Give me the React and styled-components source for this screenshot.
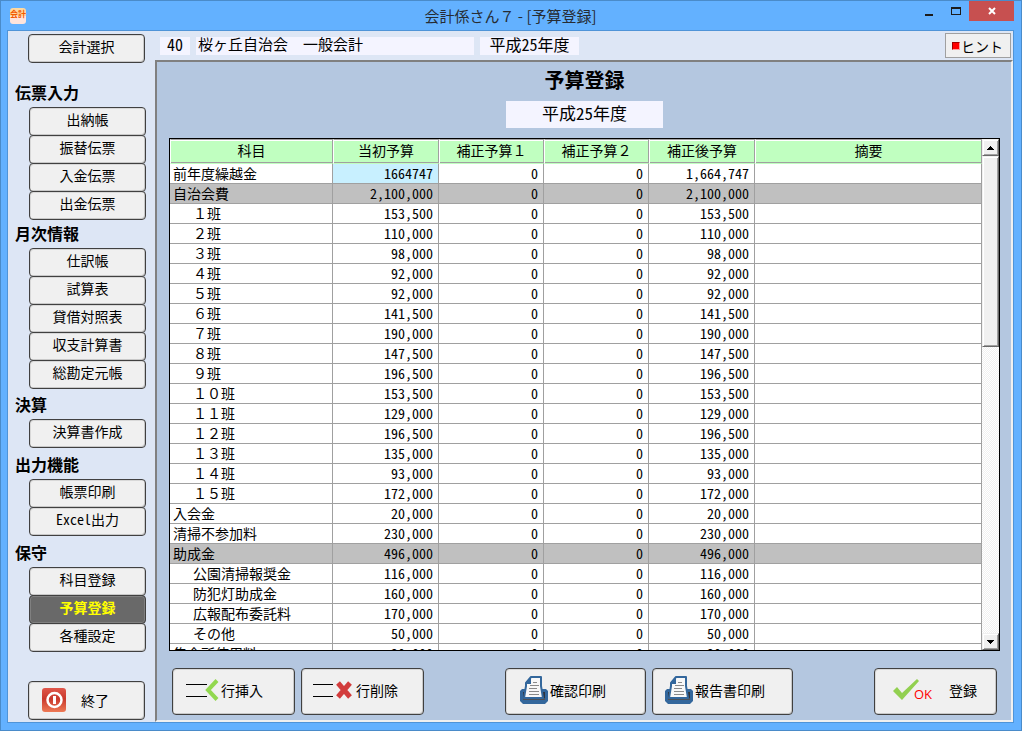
import React, { useState } from 'react';
import styled, { createGlobalStyle } from 'styled-components';

const menu = [
  { title: '伝票入力', space: 16, items: ['出納帳', '振替伝票', '入金伝票', '出金伝票'] },
  { title: '月次情報', space: 0, items: ['仕訳帳', '試算表', '貸借対照表', '収支計算書', '総勘定元帳'] },
  { title: '決算', space: 2, items: ['決算書作成'] },
  { title: '出力機能', space: 3, items: ['帳票印刷', 'Excel出力'] },
  { title: '保守', space: 3, items: ['科目登録', '予算登録', '各種設定'] },
];

const columns = ['科目', '当初予算', '補正予算１', '補正予算２', '補正後予算', '摘要'];

const rows = [
  { name: '前年度繰越金', amount: 1664747, editing: true },
  { name: '自治会費', amount: 2100000, total: true },
  { name: '１班', amount: 153500, indent: true },
  { name: '２班', amount: 110000, indent: true },
  { name: '３班', amount: 98000, indent: true },
  { name: '４班', amount: 92000, indent: true },
  { name: '５班', amount: 92000, indent: true },
  { name: '６班', amount: 141500, indent: true },
  { name: '７班', amount: 190000, indent: true },
  { name: '８班', amount: 147500, indent: true },
  { name: '９班', amount: 196500, indent: true },
  { name: '１０班', amount: 153500, indent: true },
  { name: '１１班', amount: 129000, indent: true },
  { name: '１２班', amount: 196500, indent: true },
  { name: '１３班', amount: 135000, indent: true },
  { name: '１４班', amount: 93000, indent: true },
  { name: '１５班', amount: 172000, indent: true },
  { name: '入会金', amount: 20000 },
  { name: '清掃不参加料', amount: 230000 },
  { name: '助成金', amount: 496000, total: true },
  { name: '公園清掃報奨金', amount: 116000, indent: true },
  { name: '防犯灯助成金', amount: 160000, indent: true },
  { name: '広報配布委託料', amount: 170000, indent: true },
  { name: 'その他', amount: 50000, indent: true },
  { name: '集会所使用料', amount: 20000 },
];

const format = n => n.toLocaleString('en-US');

const PrinterIcon = () => (
  <svg width="30" height="30" viewBox="0 0 30 30" aria-hidden="true">
    <path d="M3 14h24l2 2v10l-3 3H4l-3-3V16z" fill="#33679c" />
    <path d="M4 17h22v8H4z" fill="#30343c" />
    <path d="M4 23h22v2H4z" fill="#4c5158" />
    <path d="M12 2h10v9l2 12H5l2-12V8z" fill="#f8f8f8" stroke="#33679c" strokeWidth="2" strokeLinejoin="round" />
    <path d="M12 2v7H7V7z" fill="#33679c" />
    <path d="M14 7h4M11 10h9M10 13h8M10 16h10M10 19h10" transform="translate(0 .5)" stroke="#8a8a8a" />
  </svg>
);

const InsertIcon = () => (
  <svg width="34" height="24" viewBox="0 0 34 24" aria-hidden="true">
    <path d="M0 6.500h21M0 18.500h21" stroke="#000" />
    <path d="M31 2.500L22 12l9 9.500" fill="none" stroke="#92d84f" strokeWidth="4" />
  </svg>
);

const DeleteIcon = () => (
  <svg width="42" height="24" viewBox="0 0 42 24" aria-hidden="true">
    <path d="M0 6.500h20M0 18.500h20" stroke="#000" />
    <path d="M25 5l12 14M37 5L25 19" fill="none" stroke="#d23c3c" strokeWidth="5" />
  </svg>
);

const CheckIcon = () => (
  <svg width="27" height="22" viewBox="0 0 27 22" aria-hidden="true">
    <path d="M0 12l4-4 5 6L24 0l2 2L9 21z" fill="#92d050" />
  </svg>
);

const PowerIcon = () => (
  <svg width="24" height="24" viewBox="0 0 24 24" aria-hidden="true">
    <defs>
      <linearGradient id="power" x1="0" y1="0" x2="0" y2="1">
        <stop offset="0" stopColor="#e0574a" />
        <stop offset="0.45" stopColor="#c9382c" />
        <stop offset="1" stopColor="#ee7a55" />
      </linearGradient>
    </defs>
    <rect width="24" height="24" rx="3" fill="url(#power)" />
    <circle cx="12.500" cy="12" r="7" fill="none" stroke="#fff" strokeWidth="2.500" />
    <path d="M12.500 8v8" stroke="#fff" strokeWidth="3" />
  </svg>
);

const App = () => {
  const [value, setValue] = useState('1664747');

  return (
    <Window>
      <GlobalStyle />
      <TitleBar>
        <AppIcon>会計</AppIcon>
        <WindowTitle>会計係さん７ - [予算登録]</WindowTitle>
        <WindowButtons>
          <WindowButton aria-label="最小化">
            <svg width="8" height="14"><path d="M0 10h8v2H0z" fill="#1c1c1c" /></svg>
          </WindowButton>
          <WindowButton aria-label="最大化">
            <svg width="10" height="14"><path d="M0 3h10v8H0zM1 5v5h8V5z" fill="#1c1c1c" fillRule="evenodd" /></svg>
          </WindowButton>
          <WindowButton $close aria-label="閉じる">
            <svg width="8" height="14"><path d="M1 4l6 6M7 4l-6 6" stroke="#fff" strokeWidth="2" /></svg>
          </WindowButton>
        </WindowButtons>
      </TitleBar>

      <Client>
        <Sidebar>
          <MenuButton>会計選択</MenuButton>
          {menu.map(section => (
            <Section key={section.title} $space={section.space}>
              <SectionTitle>{section.title}</SectionTitle>
              <SectionItems>
                {section.items.map(item => (
                  <MenuButton key={item} $active={item === '予算登録'}>{item}</MenuButton>
                ))}
              </SectionItems>
            </Section>
          ))}
          <ExitButton>
            <PowerIcon />
            終了
          </ExitButton>
        </Sidebar>

        <Content>
          <InfoBar>
            <InfoCode>40</InfoCode>
            <InfoName>桜ヶ丘自治会　一般会計</InfoName>
            <InfoYear>平成25年度</InfoYear>
            <HintButton><HintMark />ヒント</HintButton>
          </InfoBar>

          <Panel>
            <Heading>予算登録</Heading>
            <Year>平成25年度</Year>

            <Grid>
              <Scroller>
                <Table>
                  <colgroup>
                    <Col $width={163} />
                    <Col $width={106} />
                    <Col $width={105} />
                    <Col $width={105} />
                    <Col $width={106} />
                    <col />
                  </colgroup>
                  <thead>
                    <tr>{columns.map(column => <HeadCell key={column}>{column}</HeadCell>)}</tr>
                  </thead>
                  <tbody>
                    {rows.map(row => (
                      <Row key={row.name} $total={row.total}>
                        <Cell $indent={row.indent}>{row.name}</Cell>
                        {row.editing ? (
                          <EditCell>
                            <CellInput
                              aria-label="前年度繰越金 当初予算"
                              value={value}
                              onChange={e => setValue(e.target.value)}
                            />
                          </EditCell>
                        ) : (
                          <NumberCell>{format(row.amount)}</NumberCell>
                        )}
                        <NumberCell>0</NumberCell>
                        <NumberCell>0</NumberCell>
                        <NumberCell>{format(row.amount)}</NumberCell>
                        <Cell />
                      </Row>
                    ))}
                  </tbody>
                </Table>
              </Scroller>
              <ScrollBar>
                <ScrollButton aria-label="上へ">
                  <svg width="7" height="4"><path d="M3 0h1v1h1v1h1v1h1v1H0V3h1V2h1V1h1z" /></svg>
                </ScrollButton>
                <Track><Thumb /></Track>
                <ScrollButton aria-label="下へ">
                  <svg width="7" height="4"><path d="M0 0h7v1H6v1H5v1H4v1H3V3H2V2H1V1H0z" /></svg>
                </ScrollButton>
              </ScrollBar>
            </Grid>

            <Actions>
              <ActionGroup>
                <ActionButton><InsertIcon />行挿入</ActionButton>
                <ActionButton $tight><DeleteIcon />行削除</ActionButton>
              </ActionGroup>
              <ActionGroup>
                <ActionButton $wide><PrinterIcon />確認印刷</ActionButton>
                <ActionButton $wide $tight><PrinterIcon />報告書印刷</ActionButton>
              </ActionGroup>
              <SubmitButton><CheckIcon /><Ok>OK</Ok>登録</SubmitButton>
            </Actions>
          </Panel>
        </Content>
      </Client>
    </Window>
  );
};

export default App;

const GlobalStyle = createGlobalStyle`
  * {
    box-sizing: border-box;
  }

  body {
    margin: 0;
    color: #000;
    font-family: "Noto Sans CJK JP", sans-serif;
    font-size: 14px;
    line-height: 20px;
  }

  button, input {
    font: inherit;
    color: inherit;
  }
`;

const Window = styled.div`
  display: flex;
  flex-direction: column;
  height: 100vh;
  min-height: 700px;
  padding: 0 7px 7px 6px;
  background: #63b1ff;
  border: 1px solid #4a8bc9;
`;

const TitleBar = styled.header`
  display: grid;
  grid-template-columns: 1fr auto 1fr;
  height: 29px;
`;

const AppIcon = styled.span`
  align-self: center;
  width: 16px;
  height: 16px;
  margin-left: 3px;
  border-radius: 3px;
  background: linear-gradient(#ffd9a0 50%, #ffe4dc 50%);
  color: #f25a00;
  font-size: 8px;
  font-weight: bold;
  line-height: 11px;
`;

const WindowTitle = styled.span`
  align-self: center;
  color: #262c33;
  font-size: 15px;
`;

const WindowButtons = styled.div`
  display: flex;
  justify-content: flex-end;
  align-items: flex-start;
`;

const WindowButton = styled.button`
  display: flex;
  align-items: center;
  justify-content: center;
  width: ${props => props.$close ? '45px' : '27px'};
  height: 20px;
  padding: 0;
  border: 0;
  background: ${props => props.$close ? '#c75050' : 'transparent'};
`;

const Client = styled.div`
  display: flex;
  flex: 1;
  min-height: 0;
  background: #dde6f5;
  border: 1px solid #4f94d8;
`;

const Sidebar = styled.nav`
  display: flex;
  flex: none;
  flex-direction: column;
  width: 147px;
  padding: 3px 0 2px 20px;
`;

const BaseButton = styled.button`
  padding: 0;
  background: #f0f0f0;
  border: 1px solid #404040;
  border-radius: 4px;
  box-shadow: inset -1px -1px #c8c8c8, inset 1px 1px #d8d8d8;
`;

const MenuButton = styled(BaseButton)`
  flex: none;
  width: 117px;
  height: 29px;
  padding-bottom: 5px;
  font-feature-settings: "hwid";

  ${props => props.$active && `
    background: #696969;
    color: #ffff00;
    font-weight: bold;
    box-shadow: inset 0 0 0 1px #808080;
  `}
`;

const Section = styled.section`
  margin-top: ${props => props.$space}px;
`;

const SectionTitle = styled.h2`
  margin: 0 0 0 -13px;
  padding-bottom: 2px;
  font-size: 16px;
  line-height: 26px;
`;

const SectionItems = styled.div`
  display: flex;
  flex-direction: column;
  padding-left: 1px;

  ${MenuButton} + ${MenuButton} {
    margin-top: -1px;
  }
`;

const ExitButton = styled(BaseButton)`
  display: flex;
  align-items: center;
  gap: 15px;
  width: 117px;
  height: 39px;
  margin-top: auto;
  padding: 0 0 2px 13px;
`;

const Content = styled.main`
  display: flex;
  flex: 1;
  flex-direction: column;
  min-width: 0;
`;

const InfoBar = styled.div`
  display: flex;
  align-items: center;
  gap: 6px;
  height: 29px;
  padding-left: 5px;
`;

const InfoField = styled.span`
  height: 18px;
  background: #f4f4ff;
  font-size: 16px;
  line-height: 14px;
  white-space: nowrap;
`;

const InfoCode = styled(InfoField)`
  width: 30px;
  font-feature-settings: "hwid";
  text-align: center;
`;

const InfoName = styled(InfoField)`
  width: 278px;
  padding-left: 2px;
  font-size: 15px;
`;

const InfoYear = styled(InfoField)`
  width: 99px;
  font-feature-settings: "hwid";
  text-align: center;
`;

const HintButton = styled.button`
  display: flex;
  align-items: center;
  width: 66px;
  height: 25px;
  margin-left: auto;
  margin-right: 2px;
  padding: 0 0 0 6px;
  background: #f0f0f0;
  border: 1px solid #a0a0a0;
`;

const HintMark = styled.span`
  width: 8px;
  height: 8px;
  margin-right: 1px;
  background: #ff0000;
  border: 1px solid #a00000;
  border-right-color: #ffa0a0;
  border-bottom-color: #ffa0a0;
`;

const Panel = styled.div`
  display: flex;
  flex: 1;
  flex-direction: column;
  min-height: 0;
  padding: 4px 11px 5px 12px;
  background: #b4c7e0;
  border: 2px solid;
  border-color: #808080 #f0f0f0 #f0f0f0 #808080;
`;

const Heading = styled.h1`
  margin: 0;
  font-size: 20px;
  line-height: 28px;
  text-align: center;
`;

const Year = styled.div`
  align-self: center;
  width: 157px;
  height: 27px;
  margin: 7px 0 10px;
  background: #f4f4ff;
  font-feature-settings: "hwid";
  font-size: 17px;
  line-height: 23px;
  text-align: center;
`;

const Grid = styled.div`
  display: flex;
  flex: 1;
  min-height: 0;
  background: #fff;
  border: 1px solid #000;
`;

const Scroller = styled.div`
  flex: 1;
  min-width: 0;
  overflow: hidden;
`;

const Table = styled.table`
  width: 100%;
  table-layout: fixed;
  border-collapse: separate;
  border-spacing: 0;
`;

const Col = styled.col`
  width: ${props => props.$width}px;
`;

const HeadCell = styled.th`
  height: 25px;
  padding: 0 0 3px;
  background: #c0ffc0;
  border: 1px solid #a0a0a0;
  border-left-color: #fff;
  border-bottom-color: #c0ffc0;
  box-shadow: inset 0 1px #fff, inset 0 -1px #a0a0a0;
  font-weight: normal;
  line-height: 20px;
`;

const Row = styled.tr`
  background: ${props => props.$total ? '#c0c0c0' : '#fff'};
`;

const Cell = styled.td`
  height: 20px;
  padding: 0 0 0 ${props => props.$indent ? '23px' : '3px'};
  border-right: 1px solid #a0a0a0;
  border-bottom: 1px solid #a0a0a0;
  line-height: 19px;
  white-space: nowrap;
`;

const NumberCell = styled(Cell)`
  padding: 0 5px 0 0;
  font-feature-settings: "hwid";
  text-align: right;
`;

const EditCell = styled(Cell)`
  padding: 0;
  background: #c8f0ff;
`;

const CellInput = styled.input`
  display: block;
  width: 100%;
  height: 19px;
  padding: 0 5px 0 0;
  background: transparent;
  border: 0;
  outline: 0;
  font-feature-settings: "hwid";
  text-align: right;
`;

const ScrollBar = styled.div`
  display: flex;
  flex: none;
  flex-direction: column;
  width: 17px;
`;

const ScrollButton = styled.button`
  display: flex;
  flex: none;
  align-items: center;
  justify-content: center;
  height: 17px;
  padding: 0;
  background: #f0f0f0;
  border: 1px solid;
  border-color: #f0f0f0 #696969 #696969 #f0f0f0;
  box-shadow: inset 1px 1px #fff, inset -1px -1px #a0a0a0;
`;

const Track = styled.div`
  flex: 1;
  background: repeating-conic-gradient(#f0f0f0 0 25%, #fff 0 50%) 0 0 / 2px 2px;
`;

const Thumb = styled.div`
  height: 40%;
  background: #f0f0f0;
  border: 1px solid;
  border-color: #f0f0f0 #696969 #696969 #f0f0f0;
  box-shadow: inset 1px 1px #fff, inset -1px -1px #a0a0a0;
`;

const Actions = styled.div`
  display: flex;
  justify-content: space-between;
  padding: 17px 3px 0;
`;

const ActionGroup = styled.div`
  display: flex;
  gap: 6px;
`;

const ActionButton = styled(BaseButton)`
  display: flex;
  align-items: center;
  gap: 1px;
  width: ${props => props.$wide ? '141px' : '123px'};
  height: 47px;
  padding: 0 0 3px ${props => props.$tight ? '11px' : '13px'};
`;

const SubmitButton = styled(ActionButton)`
  gap: 0;
  padding-left: 18px;
`;

const Ok = styled.span`
  margin: 8px 17px 0 -6px;
  color: #ff0000;
  font-family: "Open Sans", sans-serif;
  font-size: 13px;
`;
